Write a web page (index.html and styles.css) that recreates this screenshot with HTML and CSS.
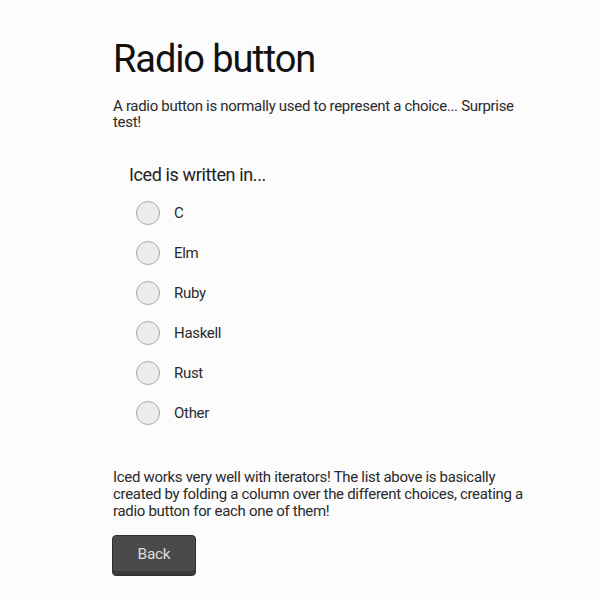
FILE: index.html
```html
<!DOCTYPE html>
<html>
<head>
<meta charset="utf-8">
<link rel="stylesheet" href="styles.css">
</head>
<body>
<main class="page">
  <h1 class="title">Radio button</h1>
  <p class="text intro">A radio button is normally used to represent a choice... Surprise test!</p>
  <section class="question">
    <h2 class="question-title">Iced is written in...</h2>
    <ul class="choices">
      <li class="choice"><span class="radio"></span><span class="label">C</span></li>
      <li class="choice"><span class="radio"></span><span class="label">Elm</span></li>
      <li class="choice"><span class="radio"></span><span class="label">Ruby</span></li>
      <li class="choice"><span class="radio"></span><span class="label">Haskell</span></li>
      <li class="choice"><span class="radio"></span><span class="label">Rust</span></li>
      <li class="choice"><span class="radio"></span><span class="label">Other</span></li>
    </ul>
  </section>
  <p class="text outro">Iced works very well with iterators! The list above is basically created by folding a column over the different choices, creating a radio button for each one of them!</p>
  <button class="back">Back</button>
</main>
</body>
</html>
```

FILE: styles.css
```css
html, body {
  margin: 0;
  padding: 0;
  background: #fdfcfd;
}
body {
  font-family: Roboto, "Liberation Sans", sans-serif;
  color: #1c1c1c;
}
.page {
  width: 420px;
  padding: 36px 0 0 113px;
  display: flex;
  flex-direction: column;
  align-items: flex-start;
}
.title {
  margin: 0;
  font-size: 38px;
  font-weight: 400;
  line-height: 46px;
  letter-spacing: -1.1px;
  color: #111;
}
.text {
  margin: 0;
  font-size: 15px;
  line-height: 16.7px;
  letter-spacing: -0.31px;
  color: #2a2a2a;
}
.intro {
  margin-top: 15.5px;
}
.question {
  margin-top: 32.6px;
  padding-left: 16px;
}
.question-title {
  margin: 0;
  font-size: 18px;
  font-weight: 400;
  line-height: 22px;
  letter-spacing: -0.38px;
  color: #222;
}
.choices {
  list-style: none;
  margin: 15px 0 0 0;
  padding: 0 0 0 7px;
  display: flex;
  flex-direction: column;
  gap: 16.2px;
}
.choice {
  display: flex;
  align-items: center;
  gap: 14px;
  height: 24px;
}
.radio {
  width: 22px;
  height: 22px;
  border-radius: 50%;
  border: 1px solid #a9a9a9;
  background: #ececec;
}
.label {
  font-size: 15px;
  letter-spacing: -0.3px;
  color: #2a2a2a;
}
.outro {
  margin-top: 44px;
}
.back {
  margin: 15px 0 0 -1px;
  width: 84px;
  height: 41px;
  border: 1px solid #2f2f2f;
  border-radius: 4px;
  background: #4a4a4a;
  box-shadow: inset 0 -4px 0 #3a3a3a;
  color: #dedede;
  font-family: Roboto, "Liberation Sans", sans-serif;
  font-size: 15.5px;
  letter-spacing: -0.3px;
  padding: 0 0 3px 0;
}
```
